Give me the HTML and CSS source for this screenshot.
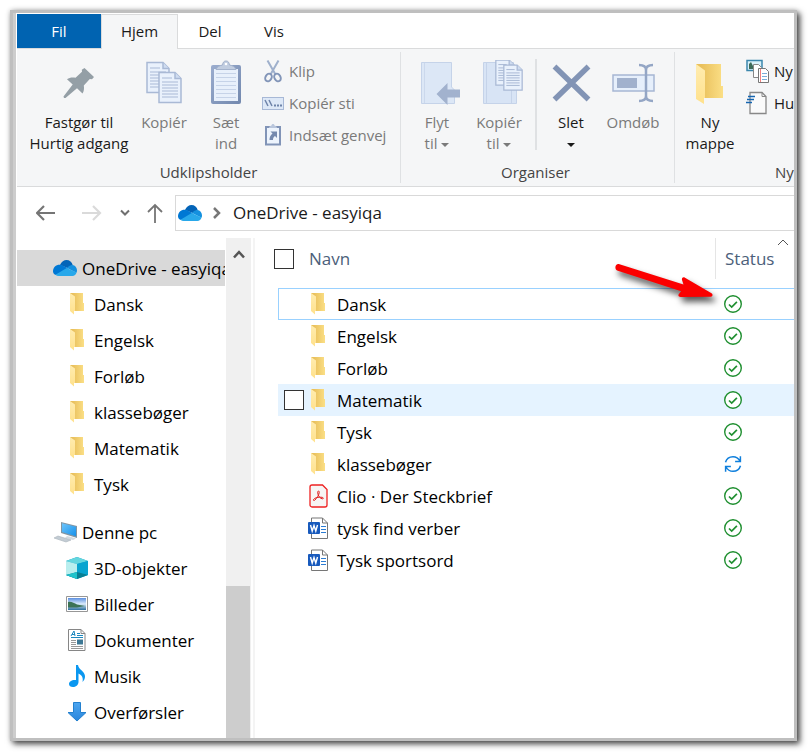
FILE: index.html
```html
<!DOCTYPE html>
<html lang="da">
<head>
<meta charset="utf-8">
<title>OneDrive - easyiqa</title>
<link rel="stylesheet" href="styles.css">
</head>
<body>
<svg class="defs" aria-hidden="true">
  <defs>
    <linearGradient id="g-folder" x1="0" y1="0" x2="1" y2="0"><stop offset="0.2" stop-color="#e9c05c"/><stop offset="1" stop-color="#fbdf86"/></linearGradient>
    <linearGradient id="g-flap" x1="0" y1="0" x2="0" y2="1"><stop offset="0" stop-color="#ffecb0"/><stop offset="1" stop-color="#ffe18c"/></linearGradient>
    <linearGradient id="g-screen" x1="0" y1="0" x2="1" y2="1"><stop offset="0" stop-color="#6cc4fb"/><stop offset="1" stop-color="#1590ea"/></linearGradient>
    <linearGradient id="g-sky" x1="0" y1="0" x2="0" y2="1"><stop offset="0" stop-color="#5b8fe0"/><stop offset="0.5" stop-color="#dcecfb"/><stop offset="1" stop-color="#2c6f9d"/></linearGradient>
    <linearGradient id="g-down" x1="0" y1="0" x2="0" y2="1"><stop offset="0" stop-color="#4da6f0"/><stop offset="1" stop-color="#2a86dc"/></linearGradient>
    <linearGradient id="g-clip" x1="0" y1="0" x2="1" y2="1"><stop offset="0" stop-color="#9badcf"/><stop offset="1" stop-color="#7288ae"/></linearGradient>
  </defs>
  <symbol id="folder" viewBox="0 0 16 22">
    <path d="M1 0h13v10h1v8H5z" fill="url(#g-folder)"/>
    <path d="M1 0l5 3.500V18H5v3.500L1 18z" fill="url(#g-flap)"/>
  </symbol>
  <symbol id="cloud" viewBox="0 0 24 16">
    <path d="M7 5C8.500 1.500 11 0 13.500 0c3 0 5.500 2 6.200 5l-5 3z" fill="#0364b8"/>
    <path d="M0 11.500C0 7.500 3 4.800 6.500 4.800c2.500 0 4 1.200 8.500 3.700L3 15C1.200 14.500 0 13 0 11.500z" fill="#0078d4"/>
    <path d="M14 8c1.500-2 3.500-3 5.500-3C22 5.300 24 7.600 24 10.500c0 .8-.2 1.500-.5 2.200z" fill="#1490df"/>
    <path d="M2.500 14.800L13.700 8l9.800 4.500C23 14.500 21.300 16 19.500 16h-14c-1.200 0-2.200-.4-3-1.200z" fill="#28a8ea"/>
  </symbol>
  <symbol id="ok" viewBox="0 0 18 18">
    <circle cx="9" cy="9" r="8.300" fill="#fff" stroke="#1f8f30" stroke-width="1.400"/>
    <path d="M5 9.500l2.700 2.600 5.200-5.200" fill="none" stroke="#1f8f30" stroke-width="1.700"/>
  </symbol>
  <symbol id="sync" viewBox="0 0 18 18">
    <g fill="none" stroke="#0f7fdc" stroke-width="1.500">
      <path d="M1.500 7.200C2.600 3.500 5.500 1.700 9 1.700c3 0 5.500 1.500 7 4.300M16.400 1.200v5.300h-5.300"/>
      <path d="M16.500 10.800c-1.100 3.700-4 5.500-7.500 5.500-3 0-5.500-1.500-7-4.300M1.600 16.800v-5.300h5.300"/>
    </g>
  </symbol>
  <symbol id="word" viewBox="0 0 20 22">
    <path d="M3.500 1h11l5 5v15.500h-16z" fill="#fff" stroke="#767676"/>
    <path d="M14.500 1v5h5" fill="none" stroke="#767676"/>
    <path d="M13 9.500h5M13 12.500h5M13 15.500h5" stroke="#2b7cd3" stroke-width="1.200"/>
    <rect x="0" y="5" width="12" height="12" rx="1" fill="#185abd"/>
    <path d="M2.500 8l1.700 6L6 8.500 7.800 14l1.700-6" fill="none" stroke="#fff" stroke-width="1.400"/>
  </symbol>
  <symbol id="pdf" viewBox="0 0 20 24">
    <path d="M4 1h10.500l4.500 4.500V21a2 2 0 0 1-2 2H4a2 2 0 0 1-2-2V3a2 2 0 0 1 2-2z" fill="#f7f5f4" stroke="#ee2222" stroke-width="1.300"/>
    <path d="M5.500 15.500c1-1.700 5-2.700 8.500-2.200 1.800.4 1.700 1.800.2 1.500-2.200-.3-4.200-3-4.500-6 0-2.500 1.700-2.500 1.500 0C11 11 8.500 14.500 7 16c-1 1-2 .4-1.500-.5z" fill="none" stroke="#e02020"/>
  </symbol>
  <symbol id="down" viewBox="0 0 8 4"><path d="M0 0h8L4 4z" fill="currentColor"/></symbol>
  <symbol id="sheet" viewBox="0 0 24 32">
    <path d="M1 1h16l6 6v24H1z" fill="#e9f1fc" stroke="#a9b9d5" stroke-width="1.500"/>
    <path d="M17 1v6h6" fill="#cfdcf0" stroke="#a9b9d5" stroke-width="1.500"/>
    <path d="M4 6.500h10M4 10.500h16M4 13.500h16M4 16.500h16M4 19.500h16M4 22.500h16M4 25.500h16" stroke="#a9b9d5" stroke-width="1.200"/>
  </symbol>
</svg>

<div class="window">
  <nav class="tabs">
    <button class="tab file" type="button">Fil</button>
    <button class="tab active" type="button">Hjem</button>
    <button class="tab" type="button">Del</button>
    <button class="tab" type="button">Vis</button>
  </nav>

  <section class="ribbon">
    <div class="group clipboard">
      <div class="tools">
        <button class="tool wide" type="button">
          <svg width="48" height="48" viewBox="0 0 48 48"><path d="M29.500 8l9.500 9-2 2.200-2.200-.2-6 6.500c.5 3.200.2 5.500-1.300 8l-5.500-5.200L10.500 38 9 38l-.5-1.500 9.200-12-5.700-5.300c2.500-1.700 5-2 8.500-1.500l6.500-6-.2-2z" fill="#949fa6"/></svg>
          <span>Fastgør til<br>Hurtig adgang</span>
        </button>
        <button class="tool off" type="button">
          <svg width="48" height="48"><use href="#sheet" x="6" y="1" width="24" height="33"/><use href="#sheet" x="18" y="11" width="24" height="33"/></svg>
          <span>Kopiér</span>
        </button>
        <button class="tool off" type="button">
          <svg width="48" height="48" viewBox="0 0 48 48"><rect x="9" y="5" width="30" height="39" rx="2" fill="url(#g-clip)"/><path d="M12 9h24v32H12z" fill="#e8f0fb"/><path d="M14 13.500h20M14 17.500h20M14 21.500h20M14 25.500h20M14 29.500h20M14 33.500h20M14 37.500h20" stroke="#c6d3e8"/><path d="M14 9.500c1-3 4-4 6.500-4.500C21 2 22 1 24 1s3 1 3.500 4c2.500.5 5.500 1.500 6.500 4.500z" fill="#c1cde0" stroke="#a3b2cc"/><circle cx="24" cy="4" r="1.300" fill="#fff"/></svg>
          <span>Sæt<br>ind</span>
        </button>
        <div class="stack">
          <button class="mini off" type="button"><svg width="22" height="24" viewBox="0 0 22 24"><g fill="none" stroke="#9fb0cc" stroke-width="2"><path d="M5.500 1.500l8 14M16.500 1.500l-8 14"/><ellipse cx="6.500" cy="18.500" rx="3" ry="4" transform="rotate(30 6.500 18.500)" stroke="#8295b8"/><ellipse cx="15.500" cy="18.500" rx="3" ry="4" transform="rotate(-30 15.500 18.500)" stroke="#8295b8"/></g></svg><span>Klip</span></button>
          <button class="mini off" type="button"><svg width="22" height="24" viewBox="0 0 22 24"><rect x=".5" y="6.500" width="21" height="12" fill="#dde8f7" stroke="#a7b8d6"/><path d="M3 9l3 6M7 9l3 6" stroke="#6f84aa" stroke-width="1.500"/><path d="M12 14.500h2M15 14.500h2M18 14.500h2" stroke="#6f84aa" stroke-width="1.800"/></svg><span>Kopiér sti</span></button>
          <button class="mini off" type="button"><svg width="22" height="24" viewBox="0 0 22 24"><path d="M4 4h14v17.500H4z" fill="#edf4fd" stroke="#8194b7" stroke-width="2"/><path d="M7 5c0-2 2-2 2.500-2.500 0-2 3-2 3 0C13 3 15 3 15 5z" fill="#b9c6dc"/><path d="M8.500 8.500H15V15l-2-2c-1.500 1-2 2-2 4H7.500c0-2.500.7-4.500 3-6.500z" fill="#7489ae"/></svg><span>Indsæt genvej</span></button>
        </div>
      </div>
      <div class="caption">Udklipsholder</div>
    </div>
    <div class="rule"></div>
    <div class="group organise">
      <div class="tools">
        <button class="tool off" type="button">
          <svg width="48" height="48" viewBox="0 0 48 48"><path d="M8.500 2.500h30V27l3 3v13.500h-33z" fill="#dce7f6" stroke="#c5d3e9"/><path d="M11.500 3v40" stroke="#cbd8ec"/><path d="M23.500 34l11-11v6.500H47v8H34.500V45z" fill="#a2b2ce"/></svg>
          <span>Flyt<br>til <svg class="caret" width="8" height="4"><use href="#down"/></svg></span>
        </button>
        <button class="tool off" type="button">
          <svg width="48" height="48" viewBox="0 0 48 48"><path d="M8.500 2.500h30V27l3 3v13.500h-33z" fill="#d8e4f5" stroke="#c5d3e9"/><path d="M11.500 3v40M36.500 30v13" stroke="#c5d3e9"/><use href="#sheet" x="20" y="-1" width="20" height="27"/><use href="#sheet" x="28" y="4" width="20" height="27"/></svg>
          <span>Kopiér<br>til <svg class="caret" width="8" height="4"><use href="#down"/></svg></span>
        </button>
        <div class="divider"></div>
        <button class="tool" type="button">
          <svg width="48" height="48" viewBox="0 0 48 48"><path d="M7.500 6.500l34 33M41.500 6.500l-34 33" stroke="#8294b5" stroke-width="5.500"/></svg>
          <span>Slet<br><svg class="caret" width="8" height="4"><use href="#down"/></svg></span>
        </button>
        <button class="tool off" type="button">
          <svg width="48" height="48" viewBox="0 0 48 48"><rect x="4" y="15" width="41" height="16" fill="#e6effb" stroke="#a6b7d4" stroke-width="1.500"/><path d="M8 18h20v10H8z" fill="#a1b1cd"/><path d="M30 5c4 0 7 1 7 5v26c0 4-3 5-7 5M44 5c-4 0-7 1-7 5v26c0 4 3 5 7 5" fill="none" stroke="#94a6c5" stroke-width="2.500"/></svg>
          <span>Omdøb</span>
        </button>
      </div>
      <div class="caption">Organiser</div>
    </div>
    <div class="rule"></div>
    <div class="group create">
      <div class="tools">
        <button class="tool" type="button">
          <svg width="48" height="48" viewBox="0 0 48 48"><path d="M10 4h25v22h2v12H18z" fill="url(#g-folder)"/><path d="M10 4l9 6.500V38h-1v6l-8-5z" fill="url(#g-flap)"/></svg>
          <span>Ny<br>mappe</span>
        </button>
        <div class="stack">
          <button class="mini" type="button"><svg width="24" height="24" viewBox="0 0 24 24"><path d="M1 1.500h15v10H1z" fill="#d9f1fa" stroke="#3b87ad" stroke-width="1.500"/><path d="M3 10V5l2-2 2 4v3z" fill="#3d6b59"/><path d="M7.500 5.500h5l3 3v10h-8z" fill="#fff" stroke="#888"/><path d="M12.500 9.500h7l3 3v11h-10z" fill="#fff" stroke="#777"/><path d="M14.500 10v13" stroke="#f28080"/><path d="M16 14.500h5M16 17.500h5M16 20.500h5" stroke="#7aaed8"/></svg><span>Ny</span></button>
          <button class="mini" type="button"><svg width="24" height="24" viewBox="0 0 24 24"><path d="M4 1.500h12l4 4v17H4z" fill="#fafafa" stroke="#888" stroke-width="1.300"/><path d="M16 1.500v4h4" fill="none" stroke="#888"/><path d="M2 5.500h7M1 8.500h7M0 11.500h6" stroke="#1565b0" stroke-width="1.500"/></svg><span>Hu</span></button>
        </div>
      </div>
      <div class="caption">Ny</div>
    </div>
  </section>

  <section class="addressbar">
    <button class="nav" type="button" aria-label="Tilbage"><svg width="20" height="16" viewBox="0 0 20 16"><path d="M19 8H1M8 1L1 8l7 7" fill="none" stroke="#757575" stroke-width="2.200"/></svg></button>
    <button class="nav" type="button" aria-label="Frem"><svg width="20" height="16" viewBox="0 0 20 16"><path d="M0 8h18M11 1l7 7-7 7" fill="none" stroke="#dadada" stroke-width="2.200"/></svg></button>
    <button class="nav recent" type="button" aria-label="Seneste"><svg width="10" height="8" viewBox="0 0 10 8"><path d="M1 1.500l4 4 4-4" fill="none" stroke="#6f6f6f" stroke-width="2"/></svg></button>
    <button class="nav up" type="button" aria-label="Op"><svg width="16" height="20" viewBox="0 0 16 20"><path d="M8 20V2M1 9l7-7 7 7" fill="none" stroke="#757575" stroke-width="1.800"/></svg></button>
    <div class="path">
      <svg width="24" height="16"><use href="#cloud"/></svg>
      <svg class="step" width="8" height="12" viewBox="0 0 8 12"><path d="M1 1l5 5-5 5" fill="none" stroke="#777" stroke-width="2.500"/></svg>
      <a href="#">OneDrive - easyiqa</a>
    </div>
  </section>

  <main class="panes">
    <nav class="tree">
      <a class="node root selected" href="#"><svg width="24" height="16"><use href="#cloud"/></svg>OneDrive - easyiqa</a>
      <a class="node" href="#"><svg width="22" height="22"><use href="#folder"/></svg>Dansk</a>
      <a class="node" href="#"><svg width="22" height="22"><use href="#folder"/></svg>Engelsk</a>
      <a class="node" href="#"><svg width="22" height="22"><use href="#folder"/></svg>Forløb</a>
      <a class="node" href="#"><svg width="22" height="22"><use href="#folder"/></svg>klassebøger</a>
      <a class="node" href="#"><svg width="22" height="22"><use href="#folder"/></svg>Matematik</a>
      <a class="node" href="#"><svg width="22" height="22"><use href="#folder"/></svg>Tysk</a>
      <a class="node root pc" href="#"><svg width="24" height="22" viewBox="0 0 24 22"><path d="M8 1l16 4v12L8 12z" fill="#8295a3"/><path d="M9 2.300l14 3.500v9.500L9 11z" fill="url(#g-screen)"/><path d="M14 15l6 1.500 3 1-3 1.500-8-2z" fill="#d3dae0"/><path d="M1 17l4-2 13 4-5 2z" fill="#c3ccd4" stroke="#a7b1ba" stroke-width=".6"/></svg>Denne pc</a>
      <a class="node" href="#"><svg width="22" height="22" viewBox="1 0 22 22"><path d="M1 4l11-4 11 4v14l-11 4-11-4z" fill="#0aa0c8"/><path d="M1 4l11-4 11 4-11 3z" fill="#64d6de"/><path d="M1 4l11 3v10L1 18z" fill="#b9eeee"/><path d="M23 4L12 7v9l11 2z" fill="#08a4d0"/><path d="M1 18l11-3 11 3-11 4z" fill="#087f93"/><path d="M1 18l11-3v7z" fill="#1fc3cb"/></svg>3D-objekter</a>
      <a class="node" href="#"><svg width="22" height="22" viewBox="1 0 22 22"><path d="M1.500 3.500h21v15h-21z" fill="#fff" stroke="#979797"/><path d="M3 5h18v12H3z" fill="url(#g-sky)"/><path d="M3 9c3-1 6 1 9 2.500l8 1.500-8 1.500H3z" fill="#3c7355"/></svg>Billeder</a>
      <a class="node" href="#"><svg width="22" height="22" viewBox="1 0 22 22"><path d="M3.500.5h12.500l4 4v17H3.500z" fill="#fff" stroke="#868686"/><path d="M16 .5v4h4" fill="none" stroke="#868686"/><path d="M6 7l3-5 1 5M7 5.500h3M12 4.500h3M12 6.500h6M6 8.500h12" stroke="#1b88bf" fill="none"/><path d="M6 11.500h5M6 13.500h5M6 15.500h5M6 17.500h12M6 19.500h12" stroke="#999"/><path d="M12 10.500h6v5h-6z" fill="#3d7895"/></svg>Dokumenter</a>
      <a class="node" href="#"><svg width="22" height="22" viewBox="1 0 22 22"><path d="M11 0h2c.5 4.500 6.500 6 7 11 .2 2.500-1 4.500-2.500 6 1-4-.5-7-4-8.500V17c0 3-3 5-5.500 5C5.500 22 4 20.700 4 19c0-2.500 3-4.500 7-4z" fill="#0a97f0"/></svg>Musik</a>
      <a class="node" href="#"><svg width="22" height="22" viewBox="1 0 22 22"><path d="M8.500 1.500h7v10h5.500L12 20l-9-8.500h5.500z" fill="url(#g-down)" stroke="#2380cf"/></svg>Overførsler</a>
    </nav>
    <div class="scroll">
      <button class="scroll-up" type="button" aria-label="Rul op"><svg width="12" height="10" viewBox="0 0 12 10"><path d="M1 8.500l5-5.500 5 5.500" fill="none" stroke="#555" stroke-width="2.500"/></svg></button>
      <div class="thumb"></div>
    </div>
    <div class="files">
      <table>
        <thead>
          <tr>
            <th class="name"><input type="checkbox" aria-label="Vælg alle">Navn</th>
            <th class="status">Status<svg class="sort" width="12" height="7" viewBox="0 0 12 7"><path d="M1 6l5-5 5 5" fill="none" stroke="#555"/></svg></th>
          </tr>
        </thead>
        <tbody>
          <tr class="focused"><td class="name"><svg width="18" height="22"><use href="#folder"/></svg>Dansk</td><td class="status"><svg width="18" height="18"><use href="#ok"/></svg></td></tr>
          <tr><td class="name"><svg width="18" height="22"><use href="#folder"/></svg>Engelsk</td><td class="status"><svg width="18" height="18"><use href="#ok"/></svg></td></tr>
          <tr><td class="name"><svg width="18" height="22"><use href="#folder"/></svg>Forløb</td><td class="status"><svg width="18" height="18"><use href="#ok"/></svg></td></tr>
          <tr class="hover"><td class="name"><input type="checkbox" aria-label="Vælg Matematik"><svg width="18" height="22"><use href="#folder"/></svg>Matematik</td><td class="status"><svg width="18" height="18"><use href="#ok"/></svg></td></tr>
          <tr><td class="name"><svg width="18" height="22"><use href="#folder"/></svg>Tysk</td><td class="status"><svg width="18" height="18"><use href="#ok"/></svg></td></tr>
          <tr><td class="name"><svg width="18" height="22"><use href="#folder"/></svg>klassebøger</td><td class="status"><svg width="18" height="18"><use href="#sync"/></svg></td></tr>
          <tr class="document"><td class="name"><svg width="20" height="24"><use href="#pdf"/></svg>Clio · Der Steckbrief</td><td class="status"><svg width="18" height="18"><use href="#ok"/></svg></td></tr>
          <tr class="document"><td class="name"><svg width="20" height="22"><use href="#word"/></svg>tysk find verber</td><td class="status"><svg width="18" height="18"><use href="#ok"/></svg></td></tr>
          <tr class="document"><td class="name"><svg width="20" height="22"><use href="#word"/></svg>Tysk sportsord</td><td class="status"><svg width="18" height="18"><use href="#ok"/></svg></td></tr>
        </tbody>
      </table>
      <svg class="pointer" width="108" height="48" viewBox="0 0 108 48"><path d="M6.500 4.300l64 20.200-1.500-4.500c-.5-2 1-3.300 3-2.300l26.500 15.500c1.700 1.100 1.200 3.300-.7 3.500l-30 .3c-2.200 0-3.200-1.700-1.700-3.200l2-2.500L4.800 10.700C.5 9 2.500 3 6.500 4.300z" fill="#fb0000"/></svg>
    </div>
  </main>
</div>
</body>
</html>
```

FILE: styles.css
```css
* { box-sizing: border-box; }

body {
  margin: 0;
  padding: 10px 11px 11px 10px;
  min-height: 100vh;
  display: flex;
  background: #fff;
  color: #1a1a1a;
  font: 15px/21px "Open Sans", "Noto Sans", sans-serif;
}

svg { flex: none; }
.defs { position: absolute; width: 0; height: 0; }

button {
  margin: 0;
  padding: 0;
  border: 0;
  background: none;
  color: inherit;
  font: inherit;
}

a { color: inherit; text-decoration: none; }

input[type="checkbox"] {
  appearance: none;
  flex: none;
  width: 20px;
  height: 20px;
  margin: 0;
  border: 1px solid #333;
  background: #fff;
}

.window {
  flex: 1;
  min-width: 0;
  display: flex;
  flex-direction: column;
  border: 3px solid #bfbfbf;
  padding-left: 4px;
  background: #fff;
  box-shadow: inset 3px 0 #cdcdcd, 3px 3px 6px rgba(0, 0, 0, 0.7), 0 0 5px rgba(0, 0, 0, 0.2);
  overflow: hidden;
}

/* Tabs */
.tabs {
  display: flex;
  height: 36px;
  padding-top: 1px;
  border-bottom: 1px solid #dadbdc;
}

.tab { width: 64px; height: 34px; }
.tab.file { width: 84px; background: #0063b1; color: #fff; }

.tab.active {
  width: 77px;
  height: 35px;
  margin-bottom: -1px;
  border: 1px solid #dadbdc;
  border-bottom: 0;
  padding-bottom: 2px;
  background: #f5f6f7;
}

/* Ribbon */
.ribbon {
  display: flex;
  height: 138px;
  border-bottom: 1px solid #dadbdc;
  background: #f5f6f7;
}

.group {
  flex: none;
  display: flex;
  flex-direction: column;
  padding-top: 6px;
}

.clipboard { width: 383px; }
.clipboard .tools { padding-left: 8px; }
.organise { width: 273px; }
.organise .tools { padding-left: 5px; }
.organise .caption { padding-right: 4px; }
.create { flex: 1; min-width: 0; overflow: hidden; }
.create .tools { padding-left: 4px; }

.tools { display: flex; height: 107px; }
.rule { width: 1px; margin: 3px 0; background: #dfe1e3; }
.divider { width: 2px; height: 91px; margin: 4px 3px 0 5px; background: #dfe1e3; }

.caption { text-align: center; color: #444; }
.create .caption { padding-left: 100px; text-align: left; }

.tool {
  flex: none;
  display: flex;
  flex-direction: column;
  align-items: center;
  gap: 4px;
  width: 62px;
  padding-top: 5px;
  white-space: nowrap;
}

.tool.wide { width: 108px; }
.off { color: #7a7a7a; }
.caret { vertical-align: middle; }

.stack { padding-left: 5px; }

.mini {
  display: flex;
  align-items: center;
  gap: 5px;
  height: 32px;
  white-space: nowrap;
}

.create .mini { gap: 4px; }

/* Address bar */
.addressbar {
  display: flex;
  align-items: center;
  height: 51px;
  padding-left: 6px;
}

.nav {
  flex: none;
  display: flex;
  justify-content: center;
  align-items: center;
  width: 46px;
  height: 36px;
}

.nav.recent { width: 20px; }
.nav.up { width: 40px; }

.path {
  flex: 1;
  display: flex;
  align-items: center;
  height: 36px;
  padding-left: 2px;
  border: 1px solid #d9d9d9;
  border-right: 0;
  font-size: 17px;
}

.step { margin: 0 12px 0 11px; }

/* Panes */
.panes { flex: 1; display: flex; min-height: 0; }

.tree {
  flex: none;
  width: 208px;
  padding-top: 12px;
  overflow: hidden;
}

.node {
  display: flex;
  align-items: center;
  gap: 6px;
  height: 36px;
  padding-left: 49px;
  color: #000;
  font-size: 17px;
  white-space: nowrap;
}

.node.root { gap: 5px; padding-left: 36px; }
.selected { background: #d9d9d9; }
.pc { margin-top: 12px; }

.scroll {
  flex: none;
  display: flex;
  flex-direction: column;
  width: 25px;
  margin-left: 1px;
  background: #f0f0f0;
}

.scroll-up { height: 30px; }
.thumb { width: 24px; height: 152px; margin-top: auto; background: #cdcdcd; }

.files {
  position: relative;
  flex: 1;
  min-width: 0;
  margin-left: 2px;
  border-left: 2px solid #f4f4f4;
  padding-left: 19px;
  color: #000;
  font-size: 17px;
}

table, thead, tbody { display: block; }

tr {
  display: grid;
  grid-template-columns: 1fr 79px;
}

thead tr { height: 41px; margin-bottom: 9px; }

th {
  display: flex;
  align-items: center;
  padding: 0;
  color: #4c607a;
  font-weight: normal;
}

th.name { gap: 15px; }

th.status {
  position: relative;
  padding-left: 9px;
  border-left: 1px solid #e5e5e5;
}

.sort { position: absolute; top: 1px; right: 5px; }

tbody tr { height: 32px; margin-left: 4px; }

td {
  display: flex;
  align-items: center;
  padding: 0;
}

td.name { gap: 10px; padding-left: 31px; }
td.status { padding-left: 9px; }
.document td.name { gap: 9px; padding-left: 30px; }

.hover { background: #e5f3ff; }
.hover td.name { padding-left: 6px; }
.hover input { margin-right: -5px; }

.focused { box-shadow: inset 1px 1px #99d1ff, inset 0 -1px #99d1ff; }

.pointer {
  position: absolute;
  top: 22px;
  right: 73px;
  overflow: visible;
  filter: drop-shadow(3px 5px 3px rgba(0, 0, 0, 0.65));
}
```
